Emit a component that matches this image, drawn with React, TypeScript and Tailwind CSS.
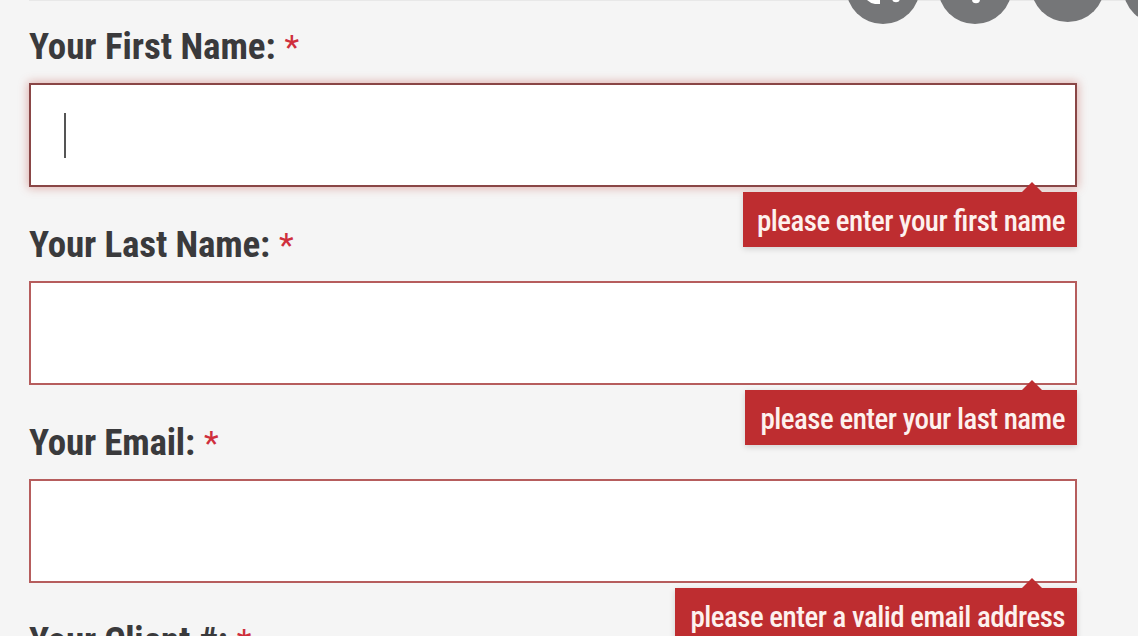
type FieldProps = {
  label: string;
  error: string;
  focused?: boolean;
  fit: string;
  tip: string;
};

const fields: FieldProps[] = [
  { label: 'Your First Name:', error: 'please enter your first name', focused: true, fit: 'tracking-[-0.06px]', tip: 'w-[334px]' },
  { label: 'Your Last Name:', error: 'please enter your last name', fit: 'tracking-[-0.16px]', tip: 'w-[332px]' },
  { label: 'Your Email:', error: 'please enter a valid email address', fit: 'tracking-[-0.2px]', tip: 'w-[402px]' },
];

function Label({ text, fit }: { text: string; fit: string }) {
  return (
    <label className="flex h-[72px] items-center text-[37px] leading-[72px] font-bold whitespace-nowrap text-[#3a3a3c]">
      <span className={fit}>{text}</span>
      <span className="ml-[9px] text-[34px] font-normal text-[#cf2f3c]">*</span>
    </label>
  );
}

function Field({ label, error, focused, fit, tip }: FieldProps) {
  return (
    <div className="relative mb-[22px]">
      <Label text={label} fit={fit} />
      <div
        className={
          focused
            ? 'flex h-[104px] items-center border-2 border-[#8a4646] bg-white pl-[33px] shadow-[0_0_9px_1px_rgba(190,70,60,0.4)]'
            : 'flex h-[104px] items-center border-2 border-[#b65d5d] bg-white pl-[33px]'
        }
      >
        {focused && <span className="mt-px h-[45px] w-[2px] bg-[#555]" />}
      </div>
      <div className={`absolute top-[181px] right-0 z-10 h-[55px] bg-[#be2d30] pr-[12px] text-right text-[29px] leading-[59px] font-medium tracking-[-0.52px] whitespace-nowrap text-[#fdf1ee] shadow-[0_2px_6px_rgba(0,0,0,0.15)] [font-feature-settings:'liga'] ${tip}`}>
        <svg className="absolute -top-[10px] right-[34px]" width="22" height="11" viewBox="0 0 22 11">
          <path d="M11 0 22 11H0Z" fill="#be2d30" />
        </svg>
        <span>{error}</span>
      </div>
    </div>
  );
}

function FloatingButtons() {
  return (
    <svg className="absolute top-0 right-0" width="298" height="30" viewBox="840 0 298 30">
      <g fill="#757678">
        <circle cx="883" cy="-13" r="37" />
        <circle cx="975" cy="-13" r="37" />
        <circle cx="1067.7" cy="-15" r="37" />
        <circle cx="1160" cy="-13" r="37" />
      </g>
      <g fill="#fff">
        <path d="M867 0H880V4H875Q870 3 867 0Z" />
        <circle cx="896" cy="-1.7" r="4" />
        <circle cx="976" cy="-0.7" r="4" />
      </g>
    </svg>
  );
}

export default function App() {
  return (
    <main className="relative h-[636px] w-[1138px] overflow-hidden bg-[#f5f5f5] font-['Roboto_Condensed',Roboto,sans-serif]">
      <div className="ml-[29px] h-px bg-[#e8e8e8]" />
      <form className="ml-[29px] w-[1048px] pt-[10px]">
        {fields.map((field) => (
          <Field key={field.label} {...field} />
        ))}
        <Label text="Your Client #:" fit="tracking-[-0.2px]" />
      </form>
      <FloatingButtons />
    </main>
  );
}
